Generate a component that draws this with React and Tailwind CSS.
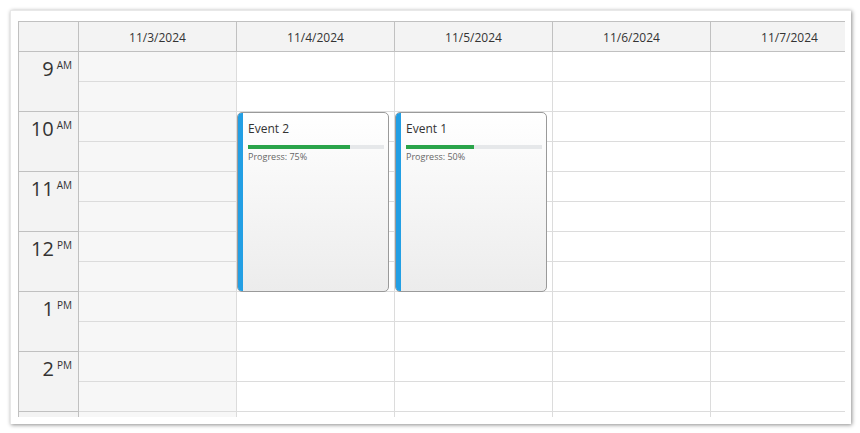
const days = ['11/3/2024', '11/4/2024', '11/5/2024', '11/6/2024', '11/7/2024'];
const hours = [
  { h: '9', ap: 'AM' },
  { h: '10', ap: 'AM' },
  { h: '11', ap: 'AM' },
  { h: '12', ap: 'PM' },
  { h: '1', ap: 'PM' },
  { h: '2', ap: 'PM' },
  { h: '', ap: '' },
];

const events = [
  { day: 1, text: 'Event 2', progress: 75 },
  { day: 2, text: 'Event 1', progress: 50 },
];

function EventBox({ text, progress }) {
  return (
    <div className="absolute left-0 top-[60px] w-[152px] h-[180px] rounded-[5px] border border-[#9a9a9a] overflow-hidden bg-gradient-to-b from-white to-[#ececec] flex">
      <div className="w-[5px] bg-[#239fe4] shrink-0" />
      <div className="flex-1 pl-[5px] pr-[4px] pt-[8px]">
        <div className="text-[12px] leading-[16px] text-[#333]">{text}</div>
        <div className="mt-[8px] h-[4px] bg-[#e6e8ea]">
          <div className="h-full bg-[#2aa44a]" style={{ width: `${progress}%` }} />
        </div>
        <div className="mt-[2px] text-[9px] leading-[12px] text-[#666]">Progress: {progress}%</div>
      </div>
    </div>
  );
}

export default function App() {
  return (
    <div className="w-[860px] h-[433px] bg-white pt-[10px] pl-[10px]" style={{ fontFamily: '"Segoe UI", "Open Sans", "Noto Sans", sans-serif' }}>
      <div className="w-[841px] h-[414px] bg-white border-t border-l border-[#e8e8e8] shadow-[1px_1px_4px_rgba(0,0,0,0.45)] pl-[7px] pt-[10px]">
        <div className="w-[827px] h-[396px] overflow-hidden border-t border-l border-[#c0c0c0]">
          <div className="w-[900px]">
            {/* header */}
            <div className="flex h-[30px] bg-[#f3f3f3] border-b border-[#c0c0c0]">
              <div className="w-[60px] shrink-0 border-r border-[#c0c0c0]" />
              {days.map((d) => (
                <div key={d} className="w-[158px] shrink-0 border-r border-[#c0c0c0] flex items-center justify-center pt-[2px] text-[12px] text-[#333]">
                  {d}
                </div>
              ))}
            </div>
            {/* body */}
            <div className="flex">
              <div className="w-[60px] shrink-0 bg-[#f3f3f3] border-r border-[#c0c0c0]">
                {hours.map((t, k) => (
                  <div key={k} className="h-[60px] border-b border-[#c0c0c0] flex justify-end pr-[6px] pt-[6px] text-[#333]">
                    <span className="text-[20px] leading-[22px]">{t.h}</span>
                    <span className="text-[10px] leading-[12px] ml-[3px] mt-[1px]">{t.ap}</span>
                  </div>
                ))}
              </div>
              {days.map((d, i) => (
                <div key={d} className={`relative w-[158px] shrink-0 border-r border-[#dcdcdc] ${i === 0 ? 'bg-[#f7f7f7]' : 'bg-white'}`}>
                  {hours.map((t, k) => (
                    <div key={k}>
                      <div className="h-[30px] border-b border-[#dcdcdc]" />
                      <div className="h-[30px] border-b border-[#dcdcdc]" />
                    </div>
                  ))}
                  {events
                    .filter((e) => e.day === i)
                    .map((e) => (
                      <EventBox key={e.text} text={e.text} progress={e.progress} />
                    ))}
                </div>
              ))}
            </div>
          </div>
        </div>
      </div>
    </div>
  );
}
